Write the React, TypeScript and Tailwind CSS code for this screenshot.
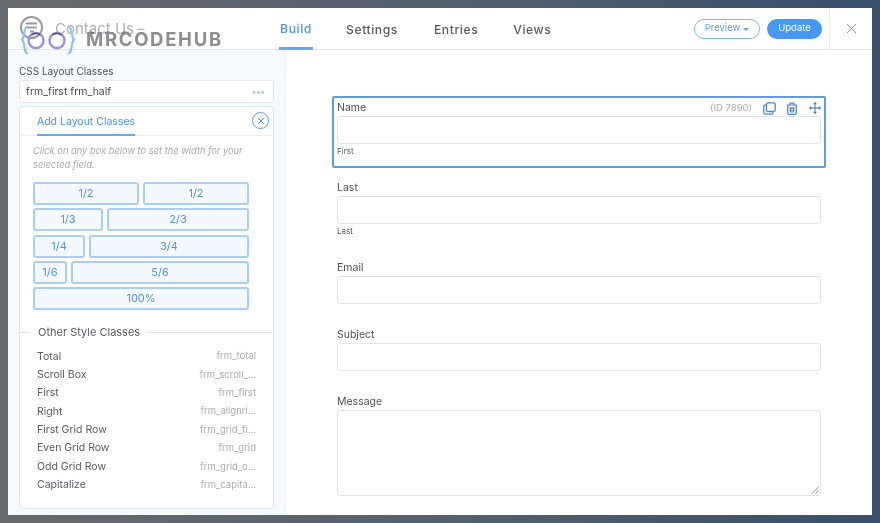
import React from "react";
import { X } from "lucide-react";

function WidthRow({ a, b }: { a: [string, string]; b?: [string, string] }) {
  const cls =
    "h-[23px] rounded-[3px] border-2 border-[#a8d0f5] bg-[#f3f9fe] text-[11px] leading-none text-[#5096e0] flex items-center justify-center";
  return (
    <div className="flex gap-1">
      <button className={cls + " " + a[1]}>{a[0]}</button>
      {b && <button className={cls + " " + b[1]}>{b[0]}</button>}
    </div>
  );
}

const styleRows = [
  ["Total", "frm_total"],
  ["Scroll Box", "frm_scroll_..."],
  ["First", "frm_first"],
  ["Right", "frm_alignri..."],
  ["First Grid Row", "frm_grid_fi..."],
  ["Even Grid Row", "frm_grid"],
  ["Odd Grid Row", "frm_grid_o..."],
  ["Capitalize", "frm_capita..."],
];

function Field({
  label,
  sub,
  className,
}: {
  label: string;
  sub?: string;
  className: string;
}) {
  return (
    <div className={"pl-[5px] pr-[5px] " + className}>
      <div className="text-[10.5px] leading-[14px] text-[#4c525b]">{label}</div>
      <div className="mt-[1px] h-[28px] rounded-[3px] border border-[#e3e4e6] bg-white" />
      {sub && <div className="mt-[1px] text-[8px] leading-[12px] text-[#555b63]">{sub}</div>}
    </div>
  );
}

export default function App() {
  return (
    <div className="relative h-[523px] w-[880px] overflow-hidden bg-gradient-to-r from-[#666a6e] via-[#55606c] to-[#384f6c] p-2 font-['Inter','Liberation_Sans',sans-serif]">
      <div className="flex h-[507px] w-[864px] flex-col bg-white blur-[0.5px]">
        {/* Header */}
        <header className="flex h-[42px] flex-none items-stretch border-b border-[#e6e7e9]">
          <div className="flex w-[271px] flex-none items-center pl-[12px]">
            <svg width="23" height="23" viewBox="0 0 23 23" fill="none" stroke="#999b9e" className="mb-[3px] flex-none">
              <circle cx="11.500" cy="11.500" r="10.500" strokeWidth="2" />
              <path d="M6 7.500H17M6 11.500H17M10 15.500H14" strokeWidth="2" />
            </svg>
            <span className="ml-[12px] pt-[2px] text-[15px] text-[#b0b2b5]">Contact Us</span>
            <span className="ml-[3px] pt-[2px] text-[15px] text-[#b0b2b5]">–</span>
          </div>
          <nav className="flex items-stretch text-[12.2px] font-medium tracking-[0.55px] text-[#565c64]">
            <div className="-mb-px flex w-[34px] items-center justify-center border-b-[3px] border-[#62aaf0] pt-[3px] text-[#4a97e8]">
              Build
            </div>
            <div className="ml-[33px] flex items-center pt-[3px]">Settings</div>
            <div className="ml-[36px] flex items-center pt-[3px]">Entries</div>
            <div className="ml-[35px] flex items-center pt-[3px]">Views</div>
          </nav>
          <div className="ml-auto flex items-center gap-[7px] pr-[7px]">
            <button className="flex h-[20px] w-[66px] items-center justify-center gap-[3px] rounded-full border border-[#7eb8f2] text-[9.5px] text-[#5a9fe6]">
              Preview
              <span className="mt-[1px] h-0 w-0 border-x-[3px] border-t-[3px] border-x-transparent border-t-[#5a9fe6]" />
            </button>
            <button className="flex h-[20px] w-[55px] items-center justify-center rounded-full bg-[#4699f2] text-[9.5px] text-white">
              Update
            </button>
          </div>
          <div className="flex w-[43px] flex-none items-center justify-center border-l border-[#ececee] text-[#8a8d91]">
            <X size={17} strokeWidth={1.3} />
          </div>
        </header>

        <div className="flex min-h-0 flex-1">
          {/* Sidebar */}
          <aside className="flex w-[278px] flex-none flex-col border-r border-[#eef1f5] bg-[#f6f9fd] pl-[11px] pr-[11px] pt-[14px]">
            <div className="text-[10px] leading-[14px] text-[#4c525a]">CSS Layout Classes</div>
            <div className="mt-[2px] flex h-[23px] items-center justify-between rounded-[3px] border border-[#e3e7ec] bg-white pl-[6px] pr-[8px] text-[10.5px] text-[#444b55]">
              frm_first frm_half
              <span className="text-[9px] font-bold leading-none tracking-[0.1px] text-[#a3c6ec]">•••</span>
            </div>
            <div className="mt-[3px] flex h-[403px] flex-col rounded-[4px] border border-[#d8e8f8] bg-white">
              <div className="flex h-[29px] flex-none items-end justify-between border-b border-[#eceef1] pl-[17px] pr-[4px]">
                <div className="-mb-px flex h-[27px] w-[98px] items-center justify-center whitespace-nowrap border-b-2 border-[#62aaf0] text-[10.5px] text-[#4a97e8]">
                  Add Layout Classes
                </div>
                <span className="mb-[6px] flex h-[17px] w-[17px] items-center justify-center rounded-full border border-[#5a9fe6] text-[#4a90dc]">
                  <X size={10} strokeWidth={2.4} />
                </span>
              </div>
              <div className="px-[13px] pt-[8px]">
                <p className="w-[216px] text-[9.3px] italic leading-[13.5px] text-[#a8abaf]">
                  Click on any box below to set the width for your selected field.
                </p>
                <div className="mt-[11px] flex w-[216px] flex-col gap-[3.3px]">
                  <WidthRow a={["1/2", "w-[106px]"]} b={["1/2", "w-[106px]"]} />
                  <WidthRow a={["1/3", "w-[70px]"]} b={["2/3", "w-[142px]"]} />
                  <WidthRow a={["1/4", "w-[52px]"]} b={["3/4", "w-[160px]"]} />
                  <WidthRow a={["1/6", "w-[34px]"]} b={["5/6", "w-[178px]"]} />
                  <WidthRow a={["100%", "w-[216px]"]} />
                </div>
              </div>
              <div className="mt-[15px] flex items-center">
                <div className="h-px w-[10px] bg-[#e4e7ea]" />
                <div className="px-[8px] text-[11px] leading-[14px] text-[#565c64]">Other Style Classes</div>
                <div className="h-px flex-1 bg-[#e4e7ea]" />
              </div>
              <div className="mt-[8px] pl-[17px] pr-[17px]">
                {styleRows.map(([l, r]) => (
                  <div key={l} className="flex h-[18.4px] items-center justify-between">
                    <span className="text-[10.5px] text-[#565c64]">{l}</span>
                    <span className="text-[9.5px] text-[#aaadb0]">{r}</span>
                  </div>
                ))}
              </div>
            </div>
          </aside>

          {/* Form */}
          <main className="min-w-0 flex-1 pl-[46px] pt-[46px]">
            <div className="relative h-[72px] w-[494px] rounded-[2px] border-2 border-[#5a9fe6] pt-[3px]">
              <div className="pl-[3px] pr-[3px]">
                <div className="text-[10.5px] leading-[14px] text-[#4c525b]">Name</div>
                <div className="mt-[1px] h-[28px] rounded-[3px] border border-[#e3e4e6] bg-white" />
                <div className="mt-[1px] text-[8px] leading-[12px] text-[#555b63]">First</div>
              </div>
              <div className="absolute right-[3px] top-[3px] flex items-center text-[#4a86c8]">
                <span className="mr-[11px] text-[9.5px] text-[#aaadb0]">(ID 7890)</span>
                <svg width="13" height="13" viewBox="0 0 13 13" fill="none" stroke="currentColor" strokeWidth="1.300">
                  <rect x="3.500" y="0.800" width="8.700" height="8.700" rx="1.500" />
                  <path d="M2.800 3H2.200A1.400 1.400 0 0 0 0.800 4.400V10.800A1.400 1.400 0 0 0 2.200 12.200H8.600A1.400 1.400 0 0 0 10 10.800V10.300" />
                </svg>
                <svg width="12" height="13" viewBox="0 0 12 13" fill="none" stroke="currentColor" strokeWidth="1.200" className="ml-[10px]">
                  <path d="M0.600 3H11.400M4 3V1.200H8V3M1.800 3V11A1.200 1.200 0 0 0 3 12.300H9A1.200 1.200 0 0 0 10.200 11V3" />
                  <path d="M4.300 5V10.500M6 5V10.500M7.700 5V10.500" />
                </svg>
                <svg width="12" height="12" viewBox="0 0 12 12" fill="currentColor" className="ml-[11px] text-[#3f76b0]">
                  <path d="M6 0 8 2.200H4ZM6 12 4 9.800H8ZM0 6 2.200 4V8ZM12 6 9.800 8V4Z" />
                  <path d="M5.500 2H6.500V10H5.500ZM2 5.500H10V6.500H2Z" />
                </svg>
              </div>
            </div>
            <Field label="Last" sub="Last" className="mt-[13px] w-[494px]" />
            <Field label="Email" className="mt-[24px] w-[494px]" />
            <Field label="Subject" className="mt-[24px] w-[494px]" />
            <div className="mt-[24px] w-[494px] pl-[5px] pr-[5px]">
              <div className="text-[10.5px] leading-[14px] text-[#4c525b]">Message</div>
              <div className="relative mt-[1px] h-[86px] rounded-[3px] border border-[#e3e4e6] bg-white">
                <svg width="8" height="8" viewBox="0 0 8 8" className="absolute bottom-[1px] right-[1px]" stroke="#8a8d91" strokeWidth="1">
                  <path d="M1 7.500 7.500 1M4.500 7.500 7.500 4.500" />
                </svg>
              </div>
            </div>
          </main>
        </div>
      </div>

      {/* Watermark */}
      <div className="pointer-events-none absolute left-[20px] top-[24px] flex items-center blur-[0.4px]">
        <svg width="58" height="32" viewBox="0 0 58 32" fill="none" className="overflow-visible">
          <path d="M8 2.500C3 2.500 5.500 13 2 15.500C5.500 18 3 29.500 8 29.500" stroke="#8cc4f5" strokeWidth="2.200" />
          <circle cx="16" cy="16.500" r="7.500" stroke="#9d90e2" strokeWidth="2.400" />
          <circle cx="37" cy="16.500" r="7.500" stroke="#9d90e2" strokeWidth="2.400" />
          <path d="M48 2.500C53 2.500 50.500 13 54 15.500C50.500 18 53 29.500 48 29.500" stroke="#8cc4f5" strokeWidth="2.200" />
          <path d="M11.500 11Q16 7.500 20.500 11M32.500 11Q37 7.500 41.500 11M68 9.500Q71 7 74 9.500M85 9.500Q88 7 91 9.500M102 9.500Q105 7 108 9.500" stroke="#55565c" strokeWidth="1.300" />
        </svg>
        <span className="ml-[8px] text-[18.5px] font-bold tracking-[1.7px] text-[#8b8e92]">MRCODEHUB</span>
      </div>
    </div>
  );
}
